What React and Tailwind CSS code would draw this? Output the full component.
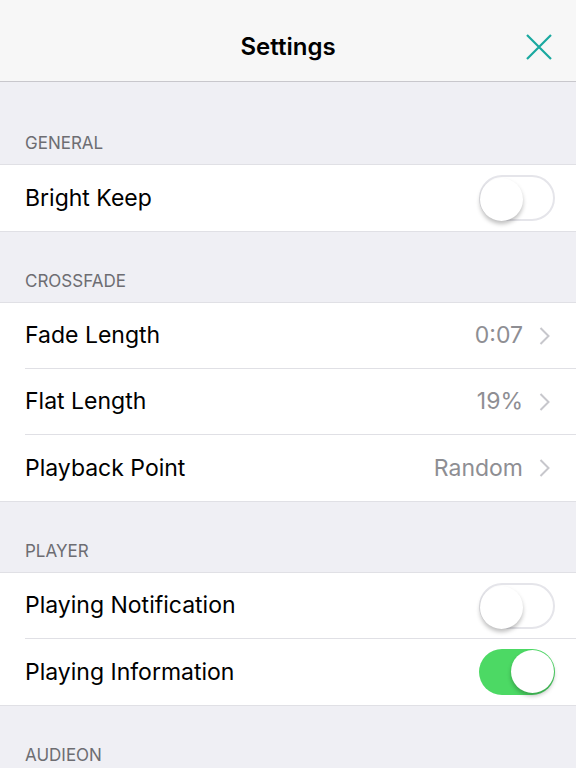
import React from "react";

const font = { fontFamily: "Inter, 'Liberation Sans', sans-serif" };

function Toggle({ on }) {
  return (
    <div
      className={
        "relative h-[46px] w-[76px] rounded-full " +
        (on ? "bg-[#4cd964]" : "bg-white border-2 border-[#e5e5ea]")
      }
    >
      <div
        className={
          "absolute top-[1px] h-[43px] w-[43px] rounded-full bg-white shadow-[0_3px_4px_rgba(0,0,0,0.25)] " +
          (on ? "right-[1px]" : "left-[-1px] top-[-1px]")
        }
      />
    </div>
  );
}

function Chevron() {
  return (
    <svg width="11" height="20" viewBox="0 0 11 20" className="ml-[16px]">
      <path d="M1.5 2 L9.5 10 L1.5 18" fill="none" stroke="#c7c7cc" strokeWidth="2" />
    </svg>
  );
}

function Row({ label, value, toggle, last }) {
  return (
    <div className="flex h-[66px] bg-white pl-[25px]">
      <div
        className={
          "flex flex-1 items-center " +
          (value !== undefined ? "pr-[26px] " : "pr-[21px] ") +
          (last ? "" : "border-b border-[#e0e0e5]")
        }
      >
        <span className="flex-1 text-[23px] text-black">{label}</span>
        {value !== undefined && (
          <span className="flex items-center text-[23px] text-[#8e8e93]">
            {value}
            <Chevron />
          </span>
        )}
        {toggle !== undefined && <Toggle on={toggle} />}
      </div>
    </div>
  );
}

function Section({ title, first, children }) {
  return (
    <div>
      <div
        className={
          "flex items-end px-[25px] pb-[8px] text-[17px] uppercase text-[#6d6d72] " +
          (first ? "h-[82px]" : "h-[70px]")
        }
      >
        {title}
      </div>
      <div className="border-y border-[#e0e0e5]">{children}</div>
    </div>
  );
}

export default function App() {
  return (
    <div className="h-[768px] w-[576px] overflow-hidden bg-[#efeff4]" style={font}>
      <div className="relative flex h-[82px] items-center justify-center border-b border-[#c8c7cc] bg-[#f7f7f7]">
        <span className="mt-[13px] text-[24px] font-semibold text-black">Settings</span>
        <svg
          className="absolute right-[23px] top-[33px]"
          width="28"
          height="28"
          viewBox="0 0 28 28"
        >
          <path d="M2 2 L26 26 M26 2 L2 26" stroke="#1aa9a0" strokeWidth="2.2" fill="none" />
        </svg>
      </div>
      <Section title="General" first>
        <Row label="Bright Keep" toggle={false} last />
      </Section>
      <Section title="Crossfade">
        <Row label="Fade Length" value="0:07" />
        <Row label="Flat Length" value="19%" />
        <Row label="Playback Point" value="Random" last />
      </Section>
      <Section title="Player">
        <Row label="Playing Notification" toggle={false} />
        <Row label="Playing Information" toggle={true} last />
      </Section>
      <Section title="Audieon">
        <Row label="" last />
      </Section>
    </div>
  );
}
